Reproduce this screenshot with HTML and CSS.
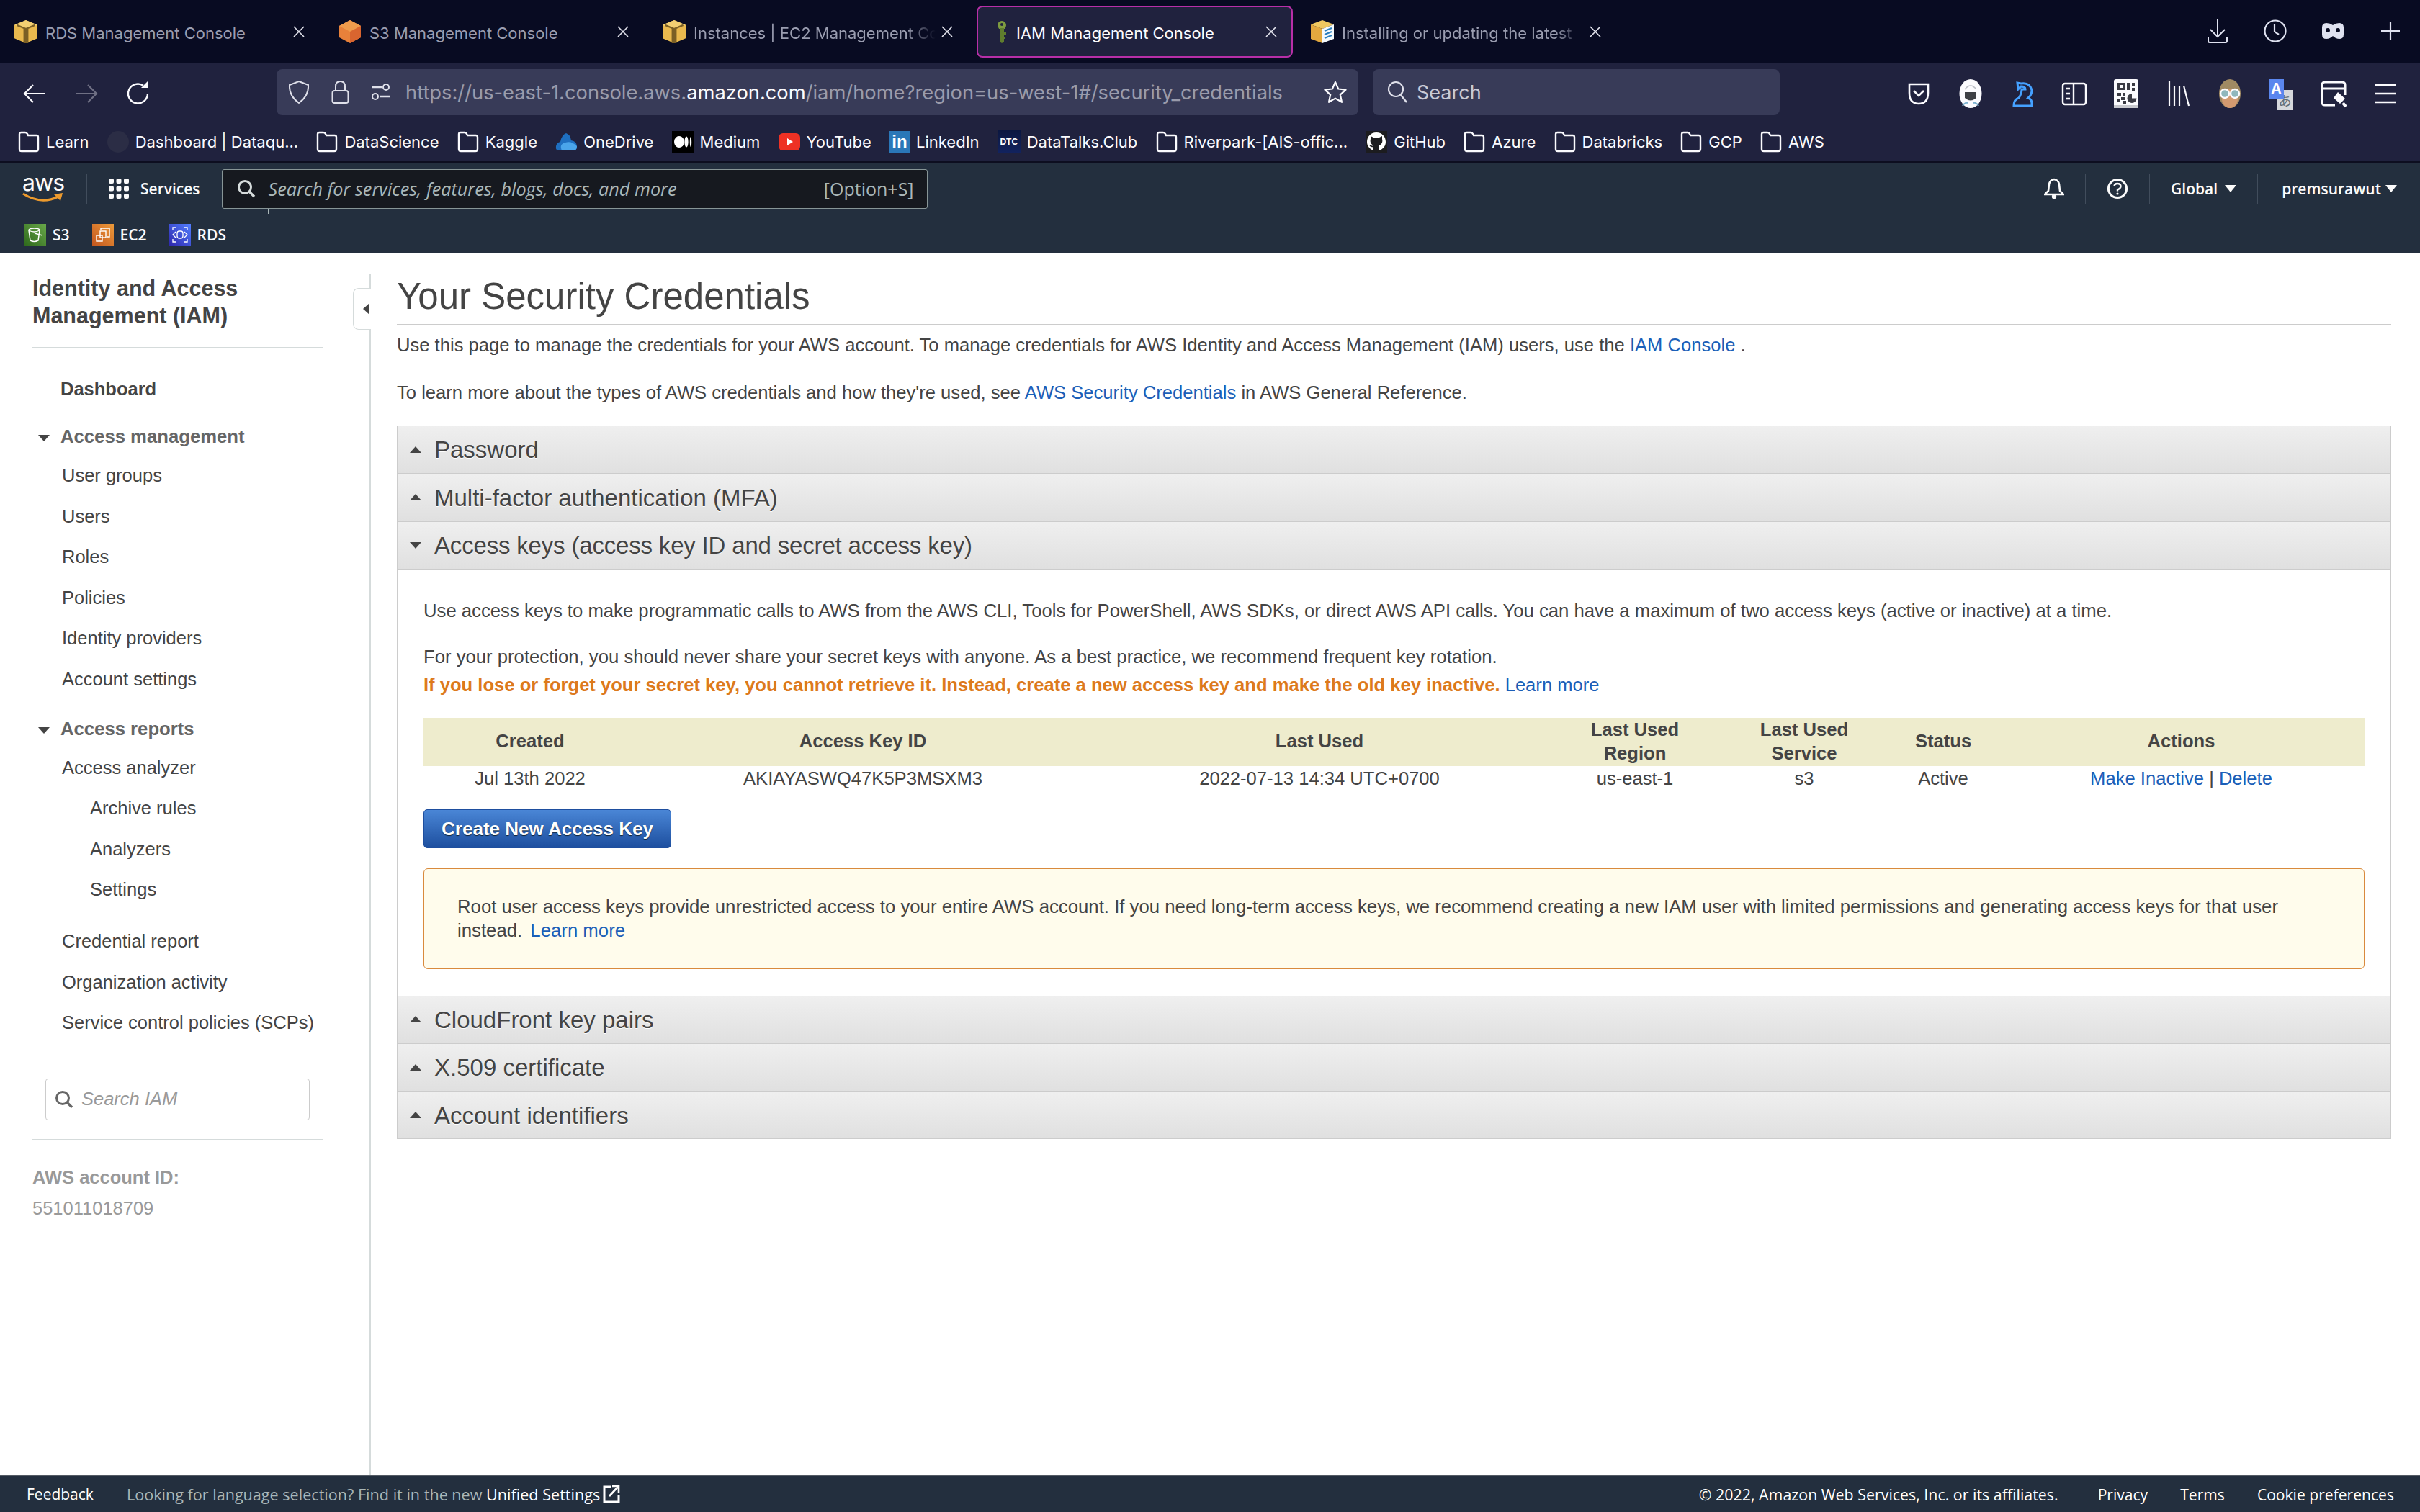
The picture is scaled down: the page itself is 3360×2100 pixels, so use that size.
FILE: index.html
```html
<!DOCTYPE html>
<html lang="en">
<head>
    <meta charset="UTF-8">
    <title>IAM Management Console</title>
    <link rel="stylesheet" href="styles.css">
</head>
<body>
    <svg class="sprites" width="0" height="0">
        <symbol id="folder" viewBox="0 0 30 30">
            <path d="M2 4.5 Q2 2 4.5 2 H10 Q12 2 13 4 L14 6 H25.5 Q28 6 28 8.5 V25 Q28 28 25 28 H5 Q2 28 2 25 Z" fill="none" stroke="#fbfbfe" stroke-width="2.4"/>
        </symbol>
        <symbol id="box" viewBox="0 0 28 28">
            <path d="M0 6 L14 0 L28 6 V22 L14 28 L0 22 Z" fill="#e9b94e"/>
            <path d="M0 6 L14 0 L28 6 L14 11 Z" fill="#f2cf72"/>
            <path d="M11 10 H17 V28 H11 Z" fill="#7a5f25"/>
            <path d="M3 6 L14 10.5 L25 6" fill="none" stroke="#7a5f25" stroke-width="2"/>
        </symbol>
        <symbol id="close" viewBox="0 0 16 16">
            <path d="M1 1 L15 15 M15 1 L1 15" stroke="#e4e5ee" stroke-width="1.6"/>
        </symbol>
    </svg>

    <div class="page">
        <header class="browser">
            <div class="tabstrip">
                <div class="tab">
                    <div class="tab-inner">
                        <svg class="favicon"><use href="#box"/></svg>
                        <span class="tab-title">RDS Management Console</span>
                        <svg class="tab-close"><use href="#close"/></svg>
                    </div>
                </div>
                <div class="tab">
                    <div class="tab-inner">
                        <svg class="favicon" viewBox="0 0 30 32">
                            <path d="M15 0 L30 8 V24 L15 32 L0 24 V8 Z" fill="#e8813a"/>
                            <path d="M15 0 L30 8 L15 16 L0 8 Z" fill="#ef9c4c"/>
                            <path d="M15 16 L30 8 V24 L15 32 Z" fill="#d9652f"/>
                        </svg>
                        <span class="tab-title">S3 Management Console</span>
                        <svg class="tab-close"><use href="#close"/></svg>
                    </div>
                </div>
                <div class="tab">
                    <div class="tab-inner">
                        <svg class="favicon"><use href="#box"/></svg>
                        <span class="tab-title tab-title-fade">Instances | EC2 Management Co</span>
                        <svg class="tab-close"><use href="#close"/></svg>
                    </div>
                </div>
                <div class="tab">
                    <div class="tab-inner tab-active">
                        <svg class="favicon" viewBox="0 0 32 32">
                            <circle cx="23" cy="7" r="6" fill="#7d9b3f"/>
                            <circle cx="23" cy="6" r="2" fill="#20223e"/>
                            <path d="M20 11 H26 V30 L23 32 L20 30 Z" fill="#5f7d2e"/>
                            <path d="M26 17 H29 V20 H26 Z M26 23 H28 V26 H26 Z" fill="#5f7d2e"/>
                        </svg>
                        <span class="tab-title">IAM Management Console</span>
                        <svg class="tab-close"><use href="#close"/></svg>
                    </div>
                </div>
                <div class="tab">
                    <div class="tab-inner">
                        <svg class="favicon" viewBox="0 0 32 32">
                            <path d="M0 6 L16 0 L32 6 L16 12 Z" fill="#f0c860"/>
                            <path d="M0 6 L16 12 V32 L0 26 Z" fill="#e3a93f"/>
                            <path d="M16 12 L32 6 V26 L16 32 Z" fill="#f5fafd"/>
                            <path d="M19 15 L29 11 M19 20 L29 16 M19 25 L29 21" stroke="#2a7fc0" stroke-width="2.2"/>
                        </svg>
                        <span class="tab-title tab-title-fade">Installing or updating the latest</span>
                        <svg class="tab-close"><use href="#close"/></svg>
                    </div>
                </div>
                <div class="tabstrip-actions">
                    <svg class="action" viewBox="0 0 32 34">
                        <path d="M16 1 V24 M6 15 L16 25 L26 15 M3 26 V31 Q3 33 5 33 H27 Q29 33 29 31 V26" fill="none" stroke="#dfe2f0" stroke-width="2"/>
                    </svg>
                    <svg class="action" viewBox="0 0 32 34">
                        <circle cx="16" cy="17" r="14.5" fill="none" stroke="#dfe2f0" stroke-width="2.2"/>
                        <path d="M15 8 V18 L21 22" fill="none" stroke="#dfe2f0" stroke-width="2.2"/>
                    </svg>
                    <svg class="action" viewBox="0 0 32 34">
                        <path fill-rule="evenodd" d="M1 12 Q1 6 7 6 Q12 6 16 9 Q20 6 25 6 Q31 6 31 12 V22 Q31 28 25 28 Q20 28 16 24 Q12 28 7 28 Q1 28 1 22 Z M6 16 A3 3 0 0 0 12 16 A3 3 0 0 0 6 16 Z M20 16 A3 3 0 0 0 26 16 A3 3 0 0 0 20 16 Z" fill="#dfe2f0"/>
                    </svg>
                    <svg class="action" viewBox="0 0 32 34">
                        <path d="M16 4 V30 M3 17 H29" stroke="#dfe2f0" stroke-width="2.2"/>
                    </svg>
                </div>
            </div>

            <div class="toolbar">
                <svg class="tool" viewBox="0 0 40 40">
                    <path d="M34 20 H7 M18 8 L6 20 L18 32" fill="none" stroke="#fbfbfe" stroke-width="2.2"/>
                </svg>
                <svg class="tool" viewBox="0 0 40 40">
                    <path d="M6 20 H33 M22 8 L34 20 L22 32" fill="none" stroke="#6f7084" stroke-width="2.2"/>
                </svg>
                <svg class="tool" viewBox="0 0 40 40">
                    <path d="M33 20 A13.5 13.5 0 1 1 27 8.8" fill="none" stroke="#fbfbfe" stroke-width="2.4"/>
                    <path d="M24 12 L34 12 V2 Z" fill="#fbfbfe"/>
                </svg>
                <div class="urlbar">
                    <svg class="url-icon" width="30" height="34" viewBox="0 0 30 34">
                        <path d="M15 2 L28 7 Q29 22 15 32 Q1 22 2 7 Z" fill="none" stroke="#dfe0ea" stroke-width="2"/>
                    </svg>
                    <svg class="url-icon" width="25" height="34" viewBox="0 0 25 34">
                        <path d="M6 15 V9 Q6 2 12.5 2 Q19 2 19 9 V15" fill="none" stroke="#dfe0ea" stroke-width="2"/>
                        <rect x="1.5" y="15" width="22" height="17" rx="3" fill="none" stroke="#dfe0ea" stroke-width="2"/>
                    </svg>
                    <svg class="url-icon" width="27" height="28" viewBox="0 0 27 28">
                        <path d="M1 7 H15 M12 20 H26" stroke="#dfe0ea" stroke-width="2.4"/>
                        <circle cx="21" cy="7" r="4" fill="none" stroke="#dfe0ea" stroke-width="2"/>
                        <circle cx="6" cy="20" r="4" fill="none" stroke="#dfe0ea" stroke-width="2"/>
                    </svg>
                    <span class="url-text">https://us-east-1.console.aws.<b>amazon.com</b>/iam/home?region=us-west-1#/security_credentials</span>
                    <svg class="url-star" width="32" height="32" viewBox="0 0 32 32">
                        <path d="M16 2 L20.2 11.5 L30.5 12.6 L22.8 19.6 L25 29.8 L16 24.6 L7 29.8 L9.2 19.6 L1.5 12.6 L11.8 11.5 Z" fill="none" stroke="#fbfbfe" stroke-width="2.2" stroke-linejoin="round"/>
                    </svg>
                </div>
                <div class="searchbar">
                    <svg width="28" height="32" viewBox="0 0 28 32">
                        <circle cx="12" cy="12" r="10" fill="none" stroke="#dfe0ea" stroke-width="2.2"/>
                        <path d="M19 20 L27 30" stroke="#dfe0ea" stroke-width="2.4"/>
                    </svg>
                    <span>Search</span>
                </div>
                <div class="extensions">
                    <svg class="tool" viewBox="0 0 40 40">
                        <path d="M7 7 H33 V19 Q33 34 20 34 Q7 34 7 19 Z" fill="none" stroke="#fbfbfe" stroke-width="2.6"/>
                        <path d="M13 16 L20 23 L27 16" fill="none" stroke="#fbfbfe" stroke-width="2.6"/>
                    </svg>
                    <svg class="tool" viewBox="0 0 40 40">
                        <ellipse cx="20" cy="20" rx="15.5" ry="20" fill="#fbfbfe"/>
                        <path d="M12 14 Q20 4 28 14" fill="none" stroke="#b9bcc4" stroke-width="1.4"/>
                        <path d="M12 18 H28 V26 Q20 33 12 26 Z" fill="#3d3f45"/>
                        <path d="M9 37 Q12 32 16 33 M31 37 Q28 32 24 33" fill="none" stroke="#7fb3d0" stroke-width="2"/>
                    </svg>
                    <svg class="tool" viewBox="0 0 40 40">
                        <path d="M8 37 Q8 28 15 26 Q19 20 19 14 H24 Q24 10 18 10 L14 14 L13 5 L18 6 Q30 4 33 15 Q33 22 28 26 Q34 28 33 37 Z" fill="none" stroke="#45a1ff" stroke-width="3"/>
                    </svg>
                    <svg class="tool" viewBox="0 0 40 40">
                        <rect x="4" y="6" width="32" height="29" rx="3" fill="none" stroke="#fbfbfe" stroke-width="2.4"/>
                        <path d="M19 6 V35 M9 13 H14 M9 20 H14 M9 27 H14" stroke="#fbfbfe" stroke-width="2.4"/>
                    </svg>
                    <svg class="tool" viewBox="0 0 40 40">
                        <rect x="3" y="0" width="34" height="40" rx="3" fill="#fbfbfe"/>
                        <path d="M8 5 H18 V15 H8 Z M11 8 H15 V12 H11 Z M21 5 H25 V15 H21 Z M28 5 H32 V9 H28 Z M28 12 H32 V16 H28 Z M8 19 H13 V23 H8 Z M15 19 H19 V24 H15 Z M8 27 H12 V32 H8 Z M13 25 H18 V29 H13 Z M15 30 H20 V34 H15 Z" fill="#3a3b44" fill-rule="evenodd"/>
                        <path d="M28 20 A6.5 6.5 0 1 0 34.5 26.5 H28 Z" fill="#3a3b44"/>
                        <rect x="3" y="36" width="34" height="4" fill="#c8c9cf"/>
                    </svg>
                    <svg class="tool" viewBox="0 0 40 40">
                        <path d="M8 3 V37 M15 9 V37 M22 9 V37 M28 9 L35 37" fill="none" stroke="#fbfbfe" stroke-width="2.2"/>
                    </svg>
                    <svg class="tool" viewBox="0 0 40 40">
                        <ellipse cx="20" cy="20" rx="15" ry="20" fill="#a08a63"/>
                        <ellipse cx="20" cy="27" rx="11" ry="13" fill="#d39a70"/>
                        <circle cx="13" cy="20" r="6" fill="#8fb7bd" stroke="#fbfbfe" stroke-width="2.4"/>
                        <circle cx="27" cy="20" r="6" fill="#8fb7bd" stroke="#fbfbfe" stroke-width="2.4"/>
                    </svg>
                    <div class="translate">
                        <span class="translate-ja">あ</span>
                        <span class="translate-a">A</span>
                    </div>
                    <svg class="tool" viewBox="0 0 40 40">
                        <path d="M22 36 H8 Q4 36 4 32 V8 Q4 4 8 4 H32 Q36 4 36 8 V22 M4 13 H36" fill="none" stroke="#fbfbfe" stroke-width="3"/>
                        <path d="M26 18 L36 27 L29 34 L20 26 Z" fill="#fbfbfe"/>
                        <path d="M33 33 L37 38" stroke="#fbfbfe" stroke-width="4"/>
                    </svg>
                    <svg class="tool tool-last" viewBox="0 0 40 40">
                        <path d="M6 8 H34 M6 20 H34 M6 32 H34" stroke="#fbfbfe" stroke-width="2.6"/>
                    </svg>
                </div>
            </div>

            <div class="bookmarks">
                <span class="mark"><svg class="mark-icon"><use href="#folder"/></svg>Learn</span>
                <span class="mark"><svg class="mark-icon" viewBox="0 0 30 30"><circle cx="15" cy="15" r="15" fill="#2b2d45"/></svg>Dashboard | Dataqu...</span>
                <span class="mark"><svg class="mark-icon"><use href="#folder"/></svg>DataScience</span>
                <span class="mark"><svg class="mark-icon"><use href="#folder"/></svg>Kaggle</span>
                <span class="mark">
                    <svg class="mark-icon" viewBox="0 0 30 30">
                        <path d="M15 3 Q21 5 22 13 Q30 14 30 22 Q30 27 25 27 H5 Q0 27 1 21 Q2 16 7 15 Q9 5 15 3 Z" fill="#1e6fc0"/>
                        <path d="M9 27 Q5 18 14 16 Q22 13 30 21 Q30 27 25 27 Z" fill="#4aa5ea"/>
                    </svg>OneDrive
                </span>
                <span class="mark">
                    <svg class="mark-icon" viewBox="0 0 30 30">
                        <rect width="30" height="30" fill="#000"/>
                        <ellipse cx="10" cy="15" rx="7" ry="8" fill="#fff"/>
                        <ellipse cx="20" cy="15" rx="2.6" ry="7.5" fill="#fff"/>
                        <ellipse cx="26" cy="15" rx="1.2" ry="7" fill="#fff"/>
                    </svg>Medium
                </span>
                <span class="mark">
                    <svg class="mark-icon" viewBox="0 0 30 30">
                        <rect y="3" width="30" height="24" rx="6" fill="#ee3124"/>
                        <path d="M12 10 L20 15 L12 20 Z" fill="#fff"/>
                    </svg>YouTube
                </span>
                <span class="mark"><span class="li-icon">in</span>LinkedIn</span>
                <span class="mark"><span class="dtc-icon">DTC</span>DataTalks.Club</span>
                <span class="mark"><svg class="mark-icon"><use href="#folder"/></svg>Riverpark-[AIS-offic...</span>
                <span class="mark">
                    <svg class="mark-icon" viewBox="0 0 30 30">
                        <rect width="30" height="30" fill="#1c1c1f"/>
                        <path d="M15 2 C7 2 2 8 2 15 C2 21 6 25 11 27 V22 C7 23 6 21 5 19 C8 20 9 21 11 20 C7 18 6 15 7 11 V7 L11 9 H19 L23 7 V11 C24 15 23 18 19 20 V27 C24 25 28 21 28 15 C28 8 23 2 15 2 Z" fill="#fff"/>
                    </svg>GitHub
                </span>
                <span class="mark"><svg class="mark-icon"><use href="#folder"/></svg>Azure</span>
                <span class="mark"><svg class="mark-icon"><use href="#folder"/></svg>Databricks</span>
                <span class="mark"><svg class="mark-icon"><use href="#folder"/></svg>GCP</span>
                <span class="mark"><svg class="mark-icon"><use href="#folder"/></svg>AWS</span>
            </div>
        </header>

        <div class="console-nav">
            <div class="console-top">
                <div class="aws-logo">
                    <span>aws</span>
                    <svg width="58" height="15" viewBox="0 0 58 15">
                        <path d="M1 2 Q26 18 50 6" fill="none" stroke="#ec9a2d" stroke-width="3.2"/>
                        <path d="M44 3 L56 1 L53 12 Z" fill="#ec9a2d"/>
                    </svg>
                </div>
                <div class="nav-sep nav-sep-logo"></div>
                <svg class="services-grid" width="28" height="28" viewBox="0 0 28 28">
                    <g fill="#fbfbfb">
                        <rect width="7" height="7" rx="2"/><rect x="10.5" width="7" height="7" rx="2"/><rect x="21" width="7" height="7" rx="2"/>
                        <rect y="10.5" width="7" height="7" rx="2"/><rect x="10.5" y="10.5" width="7" height="7" rx="2"/><rect x="21" y="10.5" width="7" height="7" rx="2"/>
                        <rect y="21" width="7" height="7" rx="2"/><rect x="10.5" y="21" width="7" height="7" rx="2"/><rect x="21" y="21" width="7" height="7" rx="2"/>
                    </g>
                </svg>
                <span class="services">Services</span>
                <div class="console-search">
                    <svg width="26" height="26" viewBox="0 0 26 26">
                        <circle cx="11" cy="11" r="8.5" fill="none" stroke="#d5dbdb" stroke-width="3"/>
                        <path d="M17 17 L24 24" stroke="#d5dbdb" stroke-width="3.4"/>
                    </svg>
                    <span class="console-search-text">Search for services, features, blogs, docs, and more</span>
                    <span class="console-search-key">[Option+S]</span>
                </div>
                <div class="console-right">
                    <svg width="28" height="30" viewBox="0 0 28 30">
                        <path d="M14 2 Q20 3 21 9 L22 18 L27 23 H1 L6 18 L7 9 Q8 3 14 2 Z" fill="none" stroke="#fbfbfb" stroke-width="2.6"/>
                        <circle cx="14" cy="26" r="3.2" fill="#fbfbfb"/>
                    </svg>
                    <div class="nav-sep"></div>
                    <svg width="30" height="30" viewBox="0 0 30 30">
                        <circle cx="15" cy="15" r="12.6" fill="none" stroke="#fbfbfb" stroke-width="3"/>
                        <path d="M10.5 12 Q10.5 8 15 8 Q19.5 8 19.5 12 Q19.5 14.5 15 16.5 V18.5" fill="none" stroke="#fbfbfb" stroke-width="2.4"/>
                        <circle cx="15" cy="22" r="1.6" fill="#fbfbfb"/>
                    </svg>
                    <div class="nav-sep"></div>
                    <span class="nav-menu">Global<i class="caret"></i></span>
                    <div class="nav-sep"></div>
                    <span class="nav-menu nav-user">premsurawut<i class="caret"></i></span>
                </div>
            </div>
            <div class="shortcuts">
                <span class="shortcut">
                    <svg class="svc-icon" viewBox="0 0 30 30">
                        <defs><linearGradient id="svc-s3" x1="0" y1="1" x2="1" y2="0"><stop offset="0" stop-color="#2f6a1c"/><stop offset="1" stop-color="#69a84a"/></linearGradient></defs>
                        <rect width="30" height="30" fill="url(#svc-s3)"/>
                        <path d="M6 9 Q6 6 13.5 6 Q21 6 21 9 L19 23 Q13.5 26 8 23 Z" fill="none" stroke="#fff" stroke-width="1.5"/>
                        <path d="M6 9 Q13.5 13 21 9 M14 13 L25 16" fill="none" stroke="#fff" stroke-width="1.3"/>
                    </svg>S3
                </span>
                <span class="shortcut">
                    <svg class="svc-icon" viewBox="0 0 30 30">
                        <defs><linearGradient id="svc-ec2" x1="0" y1="1" x2="1" y2="0"><stop offset="0" stop-color="#c4571f"/><stop offset="1" stop-color="#ec9a3a"/></linearGradient></defs>
                        <rect width="30" height="30" fill="url(#svc-ec2)"/>
                        <path d="M12 8 V6 H24 V18 H20 M6 16 H14 V24 H6 Z" fill="none" stroke="#fff" stroke-width="1.4"/>
                        <rect x="11" y="10" width="8" height="9" fill="none" stroke="#fff" stroke-width="1.4"/>
                    </svg>EC2
                </span>
                <span class="shortcut">
                    <svg class="svc-icon" viewBox="0 0 30 30">
                        <defs><linearGradient id="svc-rds" x1="0" y1="1" x2="1" y2="0"><stop offset="0" stop-color="#2e27ad"/><stop offset="1" stop-color="#527fff"/></linearGradient></defs>
                        <rect width="30" height="30" fill="url(#svc-rds)"/>
                        <path d="M5 9 V5 H9 M21 5 H25 V9 M25 21 V25 H21 M9 25 H5 V21 M9 11 L5 15 L9 19 M21 11 L25 15 L21 19" fill="none" stroke="#fff" stroke-width="1.3"/>
                        <rect x="11" y="10" width="8" height="10" rx="3" fill="none" stroke="#fff" stroke-width="1.3"/>
                    </svg>RDS
                </span>
            </div>
        </div>

        <div class="console-body">
            <aside class="sidebar">
                <div class="sidebar-toggle"><i></i></div>
                <div class="sidebar-title">Identity and Access Management (IAM)</div>
                <div class="nav-dashboard">Dashboard</div>
                <div class="nav-group"><i class="nav-arrow"></i>Access management</div>
                <div class="nav-item">User groups</div>
                <div class="nav-item">Users</div>
                <div class="nav-item">Roles</div>
                <div class="nav-item">Policies</div>
                <div class="nav-item">Identity providers</div>
                <div class="nav-item">Account settings</div>
                <div class="nav-group nav-group-next"><i class="nav-arrow"></i>Access reports</div>
                <div class="nav-item">Access analyzer</div>
                <div class="nav-item nav-sub">Archive rules</div>
                <div class="nav-item nav-sub">Analyzers</div>
                <div class="nav-item nav-sub">Settings</div>
                <div class="nav-item nav-after-sub">Credential report</div>
                <div class="nav-item">Organization activity</div>
                <div class="nav-item">Service control policies (SCPs)</div>
                <div class="sidebar-search-wrap">
                    <div class="sidebar-search">
                        <svg width="26" height="26" viewBox="0 0 26 26">
                            <circle cx="11" cy="11" r="8.5" fill="none" stroke="#666" stroke-width="3"/>
                            <path d="M17 17 L24 24" stroke="#666" stroke-width="3.4"/>
                        </svg>
                        <span>Search IAM</span>
                    </div>
                </div>
                <div class="account-label">AWS account ID:</div>
                <div class="account-id">551011018709</div>
            </aside>

            <main class="content">
                <h1>Your Security Credentials</h1>
                <p class="intro">Use this page to manage the credentials for your AWS account. To manage credentials for AWS Identity and Access Management (IAM) users, use the <a>IAM Console</a> .</p>
                <p class="intro intro-next">To learn more about the types of AWS credentials and how they're used, see <a>AWS Security Credentials</a> in AWS General Reference.</p>

                <div class="accordion">
                    <div class="acc-header"><i class="acc-up"></i>Password</div>
                    <div class="acc-header"><i class="acc-up"></i>Multi-factor authentication (MFA)</div>
                    <div class="acc-header acc-keys"><i class="acc-down"></i>Access keys (access key ID and secret access key)</div>
                    <div class="acc-body">
                        <p>Use access keys to make programmatic calls to AWS from the AWS CLI, Tools for PowerShell, AWS SDKs, or direct AWS API calls. You can have a maximum of two access keys (active or inactive) at a time.</p>
                        <p class="protect">For your protection, you should never share your secret keys with anyone. As a best practice, we recommend frequent key rotation.</p>
                        <p class="warn-line"><b>If you lose or forget your secret key, you cannot retrieve it. Instead, create a new access key and make the old key inactive.</b> <a>Learn more</a></p>

                        <table class="keys">
                            <colgroup>
                                <col class="col-created">
                                <col class="col-id">
                                <col class="col-used">
                                <col class="col-region">
                                <col class="col-service">
                                <col class="col-status">
                                <col class="col-actions">
                            </colgroup>
                            <thead>
                                <tr>
                                    <th>Created</th>
                                    <th>Access Key ID</th>
                                    <th>Last Used</th>
                                    <th>Last Used Region</th>
                                    <th>Last Used Service</th>
                                    <th>Status</th>
                                    <th>Actions</th>
                                </tr>
                            </thead>
                            <tbody>
                                <tr>
                                    <td>Jul 13th 2022</td>
                                    <td>AKIAYASWQ47K5P3MSXM3</td>
                                    <td>2022-07-13 14:34 UTC+0700</td>
                                    <td>us-east-1</td>
                                    <td>s3</td>
                                    <td>Active</td>
                                    <td><a>Make Inactive</a> | <a>Delete</a></td>
                                </tr>
                            </tbody>
                        </table>

                        <button class="create-key">Create New Access Key</button>

                        <div class="root-warning">
                            <div>Root user access keys provide unrestricted access to your entire AWS account. If you need long-term access keys, we recommend creating a new IAM user with limited permissions and generating access keys for that user</div>
                            <div>instead. <a>Learn more</a></div>
                        </div>
                    </div>
                    <div class="acc-header"><i class="acc-up"></i>CloudFront key pairs</div>
                    <div class="acc-header"><i class="acc-up"></i>X.509 certificate</div>
                    <div class="acc-header"><i class="acc-up"></i>Account identifiers</div>
                </div>
            </main>
        </div>

        <footer class="console-footer">
            <span class="foot-link foot-feedback">Feedback</span>
            <span class="foot-muted">Looking for language selection? Find it in the new <span class="foot-link">Unified Settings</span></span>
            <svg class="foot-ext" width="24" height="26" viewBox="0 0 24 26">
                <path d="M11 3 H2 V24 H22 V14" fill="none" stroke="#fff" stroke-width="3"/>
                <path d="M9 16 L21 3 M13 2 H22 V11" fill="none" stroke="#fff" stroke-width="2.6"/>
            </svg>
            <div class="foot-right">
                <span class="foot-link foot-copy">© 2022, Amazon Web Services, Inc. or its affiliates.</span>
                <span class="foot-link">Privacy</span>
                <span class="foot-link">Terms</span>
                <span class="foot-link">Cookie preferences</span>
            </div>
        </footer>
    </div>
</body>
</html>
```

FILE: styles.css
```css
* {
    box-sizing: border-box;
}
body {
    margin: 0;
    font-family: "Liberation Sans", Arial, sans-serif;
    color: #444;
    background-color: white;
}
a {
    color: #1b5fb8;
}
.sprites {
    position: absolute;
}
.page {
    height: 100vh;
    display: flex;
    flex-direction: column;
    overflow: hidden;
}

/* browser chrome */
.browser {
    font-family: Inter, sans-serif;
    flex: none;
}
.tabstrip {
    height: 88px;
    display: flex;
    background-color: #080b22;
    border-bottom: 1px solid #1a1c33;
}
.tab {
    width: 450px;
    padding: 8px 5px 7px 6px;
}
.tab-inner {
    height: 72px;
    display: flex;
    align-items: center;
    gap: 11px;
    padding: 0 7px 0 12px;
    border: 2px solid transparent;
    border-radius: 8px;
}
.tab-active {
    background-color: #20223e;
    border-color: #b82fa8;
    padding-left: 10px;
}
.favicon {
    width: 32px;
    height: 32px;
    flex: none;
}
.tab-title {
    flex: 1;
    min-width: 0;
    font-size: 22px;
    line-height: 30px;
    padding-top: 4px;
    color: #9a9db0;
    white-space: nowrap;
}
.tab-active .tab-title {
    color: #fbfbfe;
}
.tab-title-fade {
    flex: none;
    width: 336px;
    margin-right: -11px;
    -webkit-mask-image: linear-gradient(to right, black 88%, transparent 100%);
    mask-image: linear-gradient(to right, black 88%, transparent 100%);
}
.tab-close {
    width: 16px;
    height: 16px;
    flex: none;
    margin: 0 13px 0 auto;
}
.tabstrip-actions {
    margin-left: auto;
    padding: 26px 25px 0 0;
    display: flex;
    gap: 48px;
}
.action {
    width: 32px;
    height: 34px;
}

.toolbar {
    height: 84px;
    display: flex;
    align-items: center;
    padding-left: 28px;
    background-color: #20223e;
}
.tool {
    width: 40px;
    height: 40px;
    flex: none;
    margin-right: 32px;
}
.toolbar > .tool:nth-child(3),
.tool-last {
    margin-right: 0;
}
.urlbar {
    width: 1502px;
    height: 64px;
    flex: none;
    margin-left: 172px;
    margin-top: -4px;
    display: flex;
    align-items: center;
    padding: 0 16px;
    gap: 30px;
    border-radius: 8px;
    background-color: #383b58;
}
.url-icon {
    flex: none;
}
.url-text {
    margin-left: -9px;
    font-size: 27.3px;
    color: #9a9bab;
    white-space: nowrap;
}
.url-text b {
    font-weight: 400;
    color: #fbfbfe;
}
.url-star {
    margin-left: auto;
    flex: none;
}
.searchbar {
    width: 565px;
    height: 64px;
    flex: none;
    margin-left: 20px;
    margin-top: -4px;
    display: flex;
    align-items: center;
    gap: 13px;
    padding-left: 20px;
    border-radius: 8px;
    background-color: #383b58;
    font-size: 27px;
    color: #c9cad6;
}
.extensions {
    margin-left: 173px;
    display: flex;
    flex: none;
}
.translate {
    position: relative;
    width: 40px;
    height: 40px;
    flex: none;
    margin-right: 32px;
}
.translate-a {
    position: absolute;
    left: 2px;
    top: 0;
    width: 21px;
    height: 28px;
    background-color: #5a86ee;
    color: white;
    font-size: 21px;
    line-height: 28px;
    text-align: center;
    font-weight: 600;
}
.translate-ja {
    position: absolute;
    left: 14px;
    top: 15px;
    width: 21px;
    height: 28px;
    background-color: #d6d8dc;
    color: #5f6c75;
    font-family: "Noto Sans CJK JP", sans-serif;
    font-size: 18px;
    line-height: 28px;
    text-align: center;
}

.bookmarks {
    height: 54px;
    display: flex;
    align-items: flex-start;
    gap: 25.2px;
    padding: 0 0 0 25px;
    background-color: #20223e;
    border-bottom: 2px solid #0d0e20;
    font-size: 22px;
    color: #fbfbfe;
}
.mark {
    display: flex;
    align-items: center;
    gap: 9px;
    height: 34px;
    margin-top: 8px;
    white-space: nowrap;
}
.mark-icon {
    width: 30px;
    height: 30px;
    flex: none;
}
.li-icon {
    width: 28px;
    height: 30px;
    flex: none;
    background-color: #2a77b8;
    color: white;
    font-family: "Liberation Sans", sans-serif;
    font-weight: 700;
    font-size: 24px;
    line-height: 30px;
    text-align: center;
}
.dtc-icon {
    width: 32px;
    height: 32px;
    flex: none;
    background: linear-gradient(#0b1740, #12235f);
    color: white;
    font-family: "Liberation Sans", sans-serif;
    font-weight: 700;
    font-size: 12px;
    line-height: 32px;
    text-align: center;
}

/* aws console nav */
.console-nav {
    flex: none;
    height: 126px;
    background-color: #232f3e;
    font-family: "Open Sans", sans-serif;
    color: #fbfbfb;
}
.console-top {
    height: 72px;
    display: flex;
    align-items: center;
    padding-left: 32px;
}
.aws-logo {
    width: 56px;
    display: flex;
    flex-direction: column;
    align-items: center;
    margin-top: -2px;
}
.aws-logo span {
    font-family: Inter, sans-serif;
    font-size: 32px;
    line-height: 26px;
    letter-spacing: -1px;
}
.nav-sep {
    width: 1px;
    height: 42px;
    background-color: #414d5c;
}
.nav-sep-logo {
    margin-left: 32px;
}
.services-grid {
    margin-left: 30px;
}
.services {
    margin-left: 16px;
    font-size: 21px;
    font-weight: 600;
}
.console-search {
    position: relative;
    width: 980px;
    height: 55px;
    margin-left: 30px;
    display: flex;
    align-items: center;
    padding: 0 18px 0 20px;
    background-color: #16191f;
    border: 1px solid #879596;
    border-radius: 3px;
}
.console-search::after {
    content: "";
    position: absolute;
    left: 63px;
    top: 54px;
    width: 1px;
    height: 7px;
    background-color: #aab7b8;
}
.console-search-text {
    margin-left: 18px;
    font-size: 25.2px;
    font-style: italic;
    color: #aab7b8;
}
.console-search-key {
    margin-left: auto;
    font-size: 25px;
    color: #aab7b8;
}
.console-right {
    margin-left: auto;
    display: flex;
    align-items: center;
    padding-right: 32px;
    gap: 29px;
}
.nav-menu {
    display: flex;
    align-items: center;
    gap: 10px;
    font-size: 21px;
    font-weight: 600;
}
.nav-user {
    gap: 6px;
    margin-left: 4px;
}
.caret {
    width: 0;
    height: 0;
    border-left: 8px solid transparent;
    border-right: 8px solid transparent;
    border-top: 10px solid #fbfbfb;
}
.shortcuts {
    display: flex;
    gap: 31px;
    padding: 13px 0 0 34px;
}
.shortcut {
    display: flex;
    align-items: center;
    gap: 9px;
    font-size: 21px;
    font-weight: 600;
}
.svc-icon {
    width: 30px;
    height: 30px;
}

/* sidebar */
.console-body {
    flex: 1;
    display: flex;
    min-height: 0;
}
.sidebar {
    position: relative;
    width: 515px;
    flex: none;
    margin-top: 29px;
    padding: 0 65px 0 45px;
    border-right: 2px solid #d5dbdb;
    font-size: 25.5px;
}
.sidebar-toggle {
    position: absolute;
    right: -2px;
    top: 19px;
    width: 25px;
    height: 58px;
    background-color: white;
    border: 1px solid #d5dbdb;
    border-right: none;
    border-radius: 8px 0 0 8px;
    display: flex;
    align-items: center;
    padding-left: 13px;
}
.sidebar-toggle i {
    width: 0;
    height: 0;
    border-top: 8px solid transparent;
    border-bottom: 8px solid transparent;
    border-right: 9px solid #444;
}
.sidebar-title {
    font-size: 30.5px;
    font-weight: 700;
    line-height: 38px;
    padding-bottom: 25px;
    border-bottom: 1px solid #d5dbdb;
}
.nav-dashboard {
    margin-top: 37px;
    padding-left: 39px;
    font-weight: 700;
    line-height: 40px;
}
.nav-group {
    display: flex;
    align-items: center;
    gap: 15px;
    margin-top: 26px;
    margin-bottom: 6px;
    padding-left: 8px;
    line-height: 40px;
    font-size: 25.7px;
    font-weight: 700;
    color: #666;
}
.nav-group-next {
    margin-top: 20px;
}
.nav-arrow {
    width: 0;
    height: 0;
    margin-top: 5px;
    border-left: 8.5px solid transparent;
    border-right: 8.5px solid transparent;
    border-top: 9px solid #444;
}
.nav-item {
    padding-left: 41px;
    line-height: 56.6px;
    white-space: nowrap;
}
.nav-sub {
    padding-left: 80px;
}
.nav-after-sub {
    margin-top: 15px;
}
.sidebar-search-wrap {
    margin-top: 20px;
    padding: 28px 18px 26px;
    border-top: 1px solid #d5dbdb;
    border-bottom: 1px solid #d5dbdb;
}
.sidebar-search {
    height: 58px;
    display: flex;
    align-items: center;
    gap: 11px;
    padding-left: 12px;
    border: 1px solid #ccc;
    border-radius: 4px;
    font-style: italic;
    color: #999;
}
.account-label {
    margin-top: 32px;
    line-height: 40px;
    font-weight: 700;
    color: #999;
}
.account-id {
    margin-top: 3px;
    line-height: 40px;
    color: #999;
}

/* main content */
.content {
    flex: 1;
    padding: 30px 40px 0 36px;
    font-size: 25.6px;
    line-height: 34px;
}
h1 {
    margin: 0;
    font-size: 51px;
    font-weight: 400;
    line-height: 60px;
    padding-bottom: 8px;
    border-bottom: 1px solid #ccc;
}
p {
    margin: 0;
}
.intro {
    margin-top: 11px;
}
.intro-next {
    margin-top: 32px;
}
.accordion {
    margin-top: 29px;
    border-left: 1px solid #ccc;
    border-right: 1px solid #ccc;
}
.acc-header {
    height: 66.5px;
    display: flex;
    align-items: center;
    gap: 18px;
    padding: 2px 0 0 17px;
    border-top: 1px solid #ccc;
    border-bottom: 1px solid #ccc;
    background: linear-gradient(#efefef, #e0e0e0);
    font-size: 33px;
    text-shadow: 0 1px 0 #fff;
}
.acc-keys {
    letter-spacing: -0.18px;
}
.acc-up {
    width: 0;
    height: 0;
    margin-top: -2px;
    border-left: 8px solid transparent;
    border-right: 8px solid transparent;
    border-bottom: 9px solid #444;
}
.acc-down {
    width: 0;
    height: 0;
    margin-top: -2px;
    border-left: 8px solid transparent;
    border-right: 8px solid transparent;
    border-top: 9px solid #444;
}
.acc-body {
    padding: 40px 36px 37px 36px;
    font-size: 25.7px;
}
.protect {
    margin-top: 30px;
}
.warn-line {
    margin-top: 5px;
    font-size: 25.6px;
}
.warn-line b {
    color: #dd7a1c;
}
.keys {
    width: 100%;
    margin-top: 29px;
    border-collapse: collapse;
    table-layout: fixed;
    text-align: center;
    font-size: 25.6px;
}
.keys th {
    height: 67px;
    padding: 0 30px;
    background-color: #eeeccd;
    line-height: 33.5px;
    font-weight: 700;
}
.keys td {
    padding: 0;
    line-height: 34px;
}
.col-created { width: 296px; }
.col-id { width: 628px; }
.col-used { width: 640px; }
.col-region { width: 236px; }
.col-service { width: 234px; }
.col-status { width: 152px; }
.create-key {
    display: block;
    width: 344px;
    height: 54px;
    margin-top: 26px;
    padding: 2px 0 0 0;
    border: 1px solid #1e4e9e;
    border-radius: 5px;
    background: linear-gradient(#4a86d6, #1d4f9f);
    color: white;
    font-family: "Liberation Sans", Arial, sans-serif;
    font-size: 26px;
    font-weight: 700;
    text-shadow: 0 1px 1px #123;
}
.root-warning {
    height: 140px;
    margin-top: 28px;
    padding: 36px 46px 0 46px;
    background-color: #fffcec;
    border: 1px solid #d98a3d;
    border-radius: 6px;
    line-height: 33px;
    font-size: 25.75px;
}
.root-warning a {
    margin-left: 4px;
}

/* console footer */
.console-footer {
    flex: none;
    height: 52px;
    display: flex;
    align-items: center;
    padding-left: 37px;
    background-color: #232f3e;
    border-top: 2px solid #545b64;
    font-family: "Open Sans", sans-serif;
    font-size: 21.6px;
    color: #aab7b8;
}
.foot-link {
    color: white;
}
.foot-feedback {
    margin-right: 46px;
    font-size: 21px;
}
.foot-ext {
    margin-left: 4px;
}
.foot-right {
    margin-left: auto;
    padding-right: 36px;
    display: flex;
    gap: 45px;
    font-size: 21.1px;
}
.foot-copy {
    font-size: 21.4px;
    margin-right: 10px;
}
```
